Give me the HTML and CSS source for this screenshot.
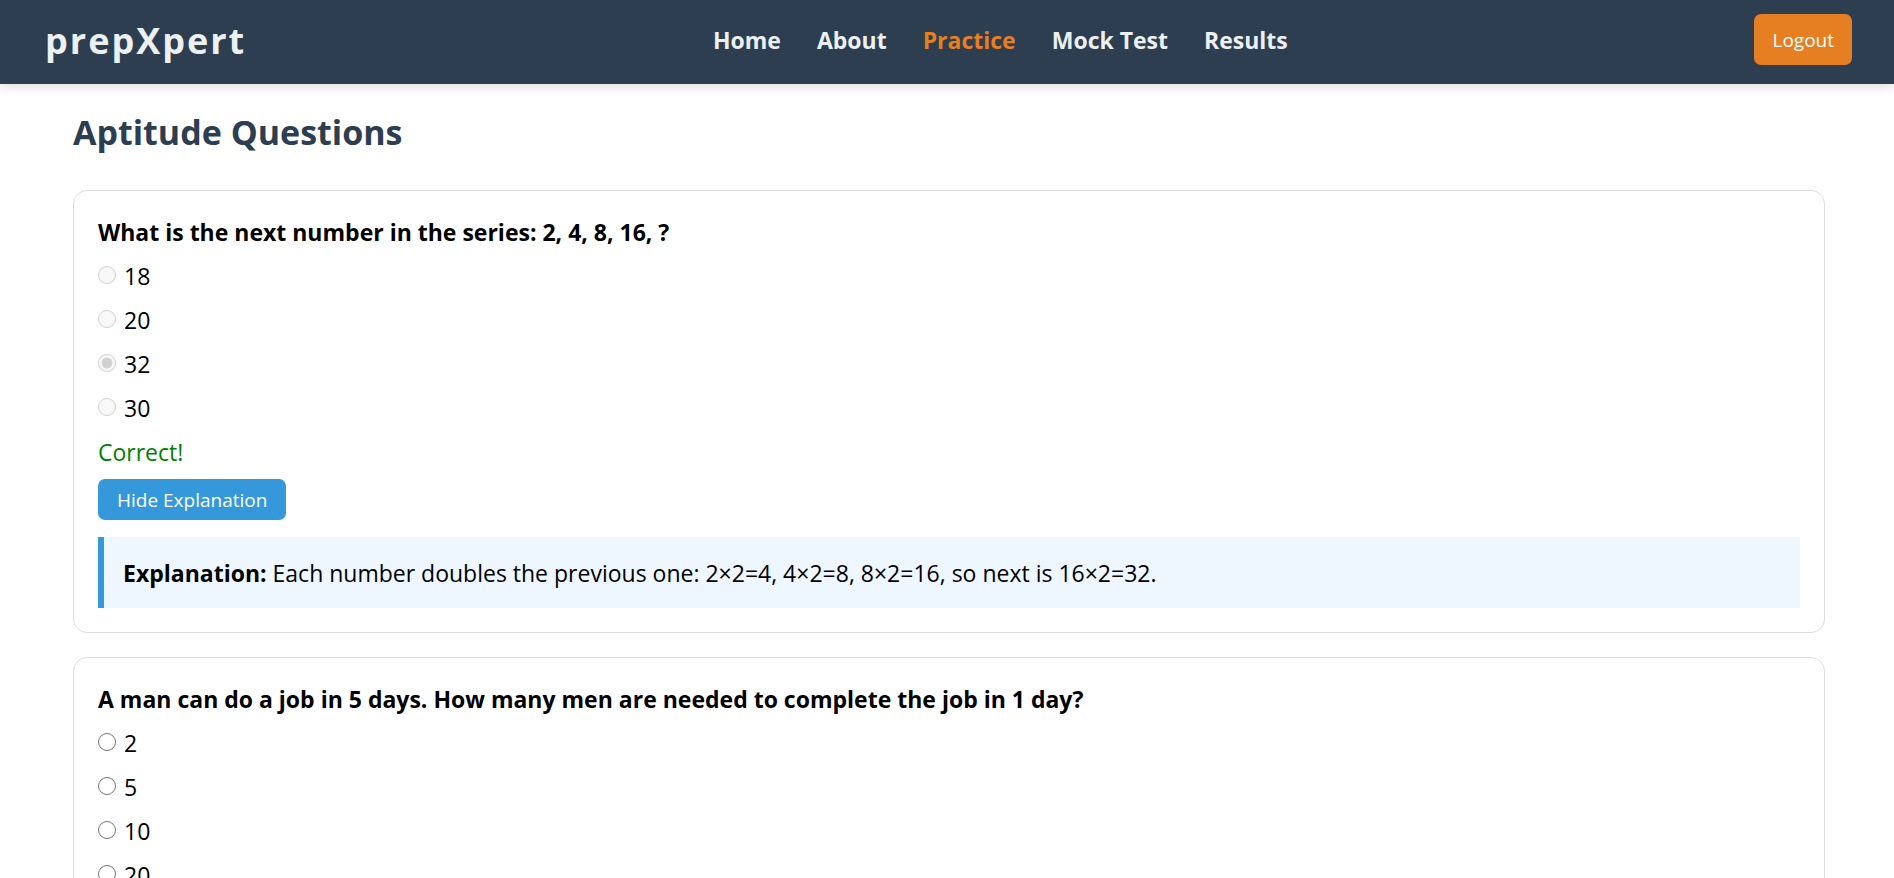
FILE: index.html
```html
<!DOCTYPE html>
<html lang="en">
<head>
<meta charset="utf-8">
<meta name="viewport" content="width=device-width, initial-scale=1">
<title>prepXpert - Aptitude Questions</title>
<link rel="stylesheet" href="styles.css">
</head>
<body>
<header class="navbar">
  <div class="logo">prepXpert</div>
  <nav class="nav-links">
    <a href="#home">Home</a>
    <a href="#about">About</a>
    <a href="#practice" class="active" aria-current="page">Practice</a>
    <a href="#mock">Mock Test</a>
    <a href="#results">Results</a>
  </nav>
  <button type="button" class="logout">Logout</button>
</header>
<main class="content">
  <h1 class="title">Aptitude Questions</h1>
  <section class="card">
    <h2 class="question">What is the next number in the series: 2, 4, 8, 16, ?</h2>
    <label class="option"><input type="radio" name="q1" disabled><span>18</span></label>
    <label class="option"><input type="radio" name="q1" disabled><span>20</span></label>
    <label class="option"><input type="radio" name="q1" disabled checked><span>32</span></label>
    <label class="option"><input type="radio" name="q1" disabled><span>30</span></label>
    <p class="result">Correct!</p>
    <button type="button" class="toggle">Hide Explanation</button>
    <div class="explanation"><strong>Explanation:</strong> Each number doubles the previous one: 2×2=4, 4×2=8, 8×2=16, so next is 16×2=32.</div>
  </section>
  <section class="card">
    <h2 class="question">A man can do a job in 5 days. How many men are needed to complete the job in 1 day?</h2>
    <label class="option"><input type="radio" name="q2"><span>2</span></label>
    <label class="option"><input type="radio" name="q2"><span>5</span></label>
    <label class="option"><input type="radio" name="q2"><span>10</span></label>
    <label class="option"><input type="radio" name="q2"><span>20</span></label>
  </section>
</main>
</body>
</html>
```

FILE: styles.css
```css
* {
  box-sizing: border-box;
}

html {
  scrollbar-width: none;
}

body {
  margin: 0;
  background: #fff;
  color: #000;
  font-family: "Segoe UI", "Open Sans", "Noto Sans", sans-serif;
  font-size: 23px;
  line-height: 32px;
}

.navbar {
  display: flex;
  align-items: center;
  justify-content: space-between;
  padding: 14px 42px 19px 45px;
  background: #2c3e50;
  box-shadow: 0 2px 12px rgba(0, 0, 0, 0.15);
}

.logo {
  padding-top: 3px;
  color: #ecf0f1;
  font-size: 36px;
  font-weight: 700;
  line-height: 48px;
  letter-spacing: 2px;
}

.nav-links {
  display: flex;
  gap: 36px;
}

.nav-links a {
  color: #ecf0f1;
  font-weight: 700;
  text-decoration: none;
}

.nav-links .active {
  color: #e67e22;
}

.logout,
.toggle {
  border: 0;
  border-radius: 7px;
  color: #fff;
  font-family: inherit;
  font-size: 19px;
  line-height: 27px;
  cursor: pointer;
}

.logout {
  padding: 13px 18px 11px;
  background: #e67e22;
}

.content {
  padding: 24px 69px 24px 73px;
}

.title {
  margin: 0 0 34px;
  color: #2c3e50;
  font-size: 34px;
  font-weight: 700;
  line-height: 48px;
}

.card {
  margin-bottom: 24px;
  padding: 24px;
  border: 1px solid #ddd;
  border-radius: 14px;
}

.question {
  margin: 0 0 4px;
  font-size: 23px;
  font-weight: 700;
  line-height: 34px;
}

.option {
  display: flex;
  align-items: center;
  gap: 8px;
  height: 44px;
}

.option span {
  padding-top: 2px;
}

.option input {
  width: 18px;
  height: 18px;
  margin: 0;
}

.result {
  margin: 0 0 4px;
  color: green;
  line-height: 46px;
}

.toggle {
  display: block;
  padding: 8px 19px 6px;
  background: #3498db;
}

.explanation {
  margin-top: 17px;
  padding: 20px 19px 19px;
  border-left: 6px solid #3498db;
  background: #eef7ff;
}
```
